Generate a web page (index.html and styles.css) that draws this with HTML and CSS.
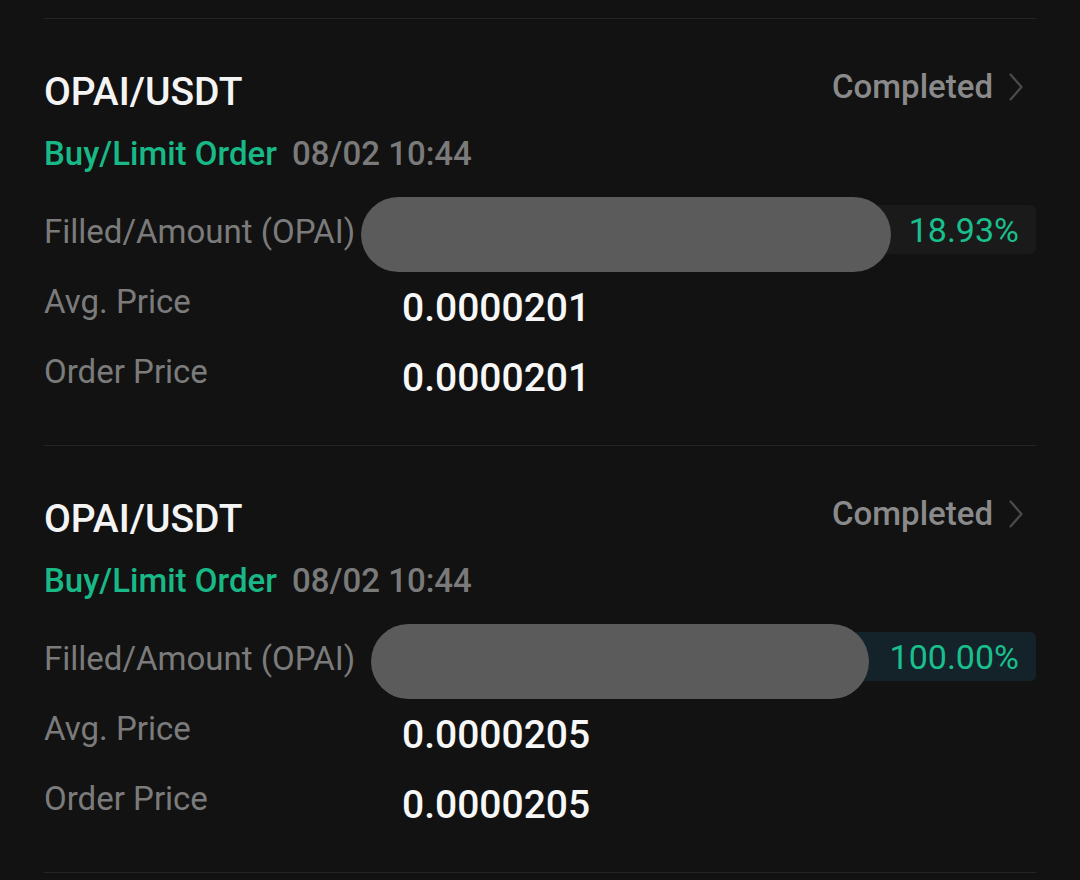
FILE: index.html
```html
<!DOCTYPE html>
<html lang="en">
<head>
    <meta charset="UTF-8">
    <meta name="viewport" content="width=device-width, initial-scale=1.0">
    <title>Order History</title>
    <link rel="stylesheet" href="styles.css">
</head>
<body>
    <div class="order-list">
        <div class="order">
            <div class="order-head">
                <div class="pair">OPAI/USDT</div>
                <div class="status">
                    <span>Completed</span>
                    <svg class="chevron" width="14" height="28" viewBox="0 0 14 28">
                        <path d="M1.5 1.5 L12.5 14 L1.5 26.5" fill="none" stroke="#4b4b4b" stroke-width="2.2" stroke-linecap="round" stroke-linejoin="round"/>
                    </svg>
                </div>
            </div>
            <div class="order-type">
                <span class="side">Buy/Limit Order</span>
                <span class="time">08/02 10:44</span>
            </div>
            <div class="row filled-row">
                <div class="label">Filled/Amount (OPAI)</div>
                <div class="progress">
                    <div class="progress-fill" style="width: 18.93%"></div>
                    <span class="percent">18.93%</span>
                </div>
                <div class="redact redact-one"></div>
            </div>
            <div class="row">
                <div class="label">Avg. Price</div>
                <div class="value">0.0000201</div>
            </div>
            <div class="row">
                <div class="label">Order Price</div>
                <div class="value">0.0000201</div>
            </div>
        </div>

        <div class="order">
            <div class="order-head">
                <div class="pair">OPAI/USDT</div>
                <div class="status">
                    <span>Completed</span>
                    <svg class="chevron" width="14" height="28" viewBox="0 0 14 28">
                        <path d="M1.5 1.5 L12.5 14 L1.5 26.5" fill="none" stroke="#4b4b4b" stroke-width="2.2" stroke-linecap="round" stroke-linejoin="round"/>
                    </svg>
                </div>
            </div>
            <div class="order-type">
                <span class="side">Buy/Limit Order</span>
                <span class="time">08/02 10:44</span>
            </div>
            <div class="row filled-row">
                <div class="label">Filled/Amount (OPAI)</div>
                <div class="progress">
                    <div class="progress-fill" style="width: 100%"></div>
                    <span class="percent">100.00%</span>
                </div>
                <div class="redact redact-two"></div>
            </div>
            <div class="row">
                <div class="label">Avg. Price</div>
                <div class="value">0.0000205</div>
            </div>
            <div class="row">
                <div class="label">Order Price</div>
                <div class="value">0.0000205</div>
            </div>
        </div>
    </div>
</body>
</html>
```

FILE: styles.css
```css
body {
    margin: 0;
    padding: 0;
    background: #121212;
    font-family: Roboto, "Noto Sans", sans-serif;
    color: #f2f2f2;
}
.order-list {
    margin: 18px 44px 0;
    border-bottom: 1px solid #252525;
}
.order {
    border-top: 1px solid #252525;
    padding: 50px 0 42px;
}
.order-head {
    display: flex;
    justify-content: space-between;
    align-items: flex-start;
}
.pair {
    font-size: 39px;
    font-weight: 500;
    line-height: 46px;
    color: #f4f4f4;
}
.status {
    display: flex;
    align-items: center;
    font-size: 33px;
    font-weight: 500;
    line-height: 36px;
    color: #8a8a8a;
}
.chevron {
    margin-left: 16px;
    margin-right: 13px;
}
.order-type {
    margin-top: 19px;
    font-size: 33px;
    font-weight: 500;
    line-height: 40px;
}
.side {
    color: #19b887;
}
.time {
    margin-left: 7px;
    color: #7a7a7a;
}
.row {
    display: flex;
    align-items: flex-start;
    margin-top: 25px;
    height: 50px;
}
.row + .row + .row {
    margin-top: 20px;
}
.label {
    width: 358px;
    flex-shrink: 0;
    font-size: 33px;
    line-height: 38px;
    color: #7b7b7b;
}
.value {
    font-size: 39px;
    font-weight: 500;
    line-height: 50px;
    color: #f7f7f7;
}
.filled-row {
    position: relative;
    margin-top: 31px;
    height: 53px;
}
.filled-row .label {
    width: auto;
    line-height: 53px;
}
.progress {
    position: relative;
    flex: 1;
    margin-left: 40px;
    height: 49px;
    background: #1a1a1a;
    border-radius: 6px;
    overflow: hidden;
    display: flex;
    justify-content: flex-end;
    align-items: center;
}
.progress-fill {
    position: absolute;
    left: 0;
    top: 0;
    bottom: 0;
    background: #14232a;
}
.percent {
    position: relative;
    padding-right: 17px;
    font-size: 34px;
    color: #19bf8c;
}
.redact {
    position: absolute;
    height: 75px;
    background: #5b5b5b;
    border-radius: 38px;
}
.redact-one {
    left: 317px;
    top: -8px;
    width: 530px;
}
.redact-two {
    left: 327px;
    top: -8px;
    width: 498px;
}
```
